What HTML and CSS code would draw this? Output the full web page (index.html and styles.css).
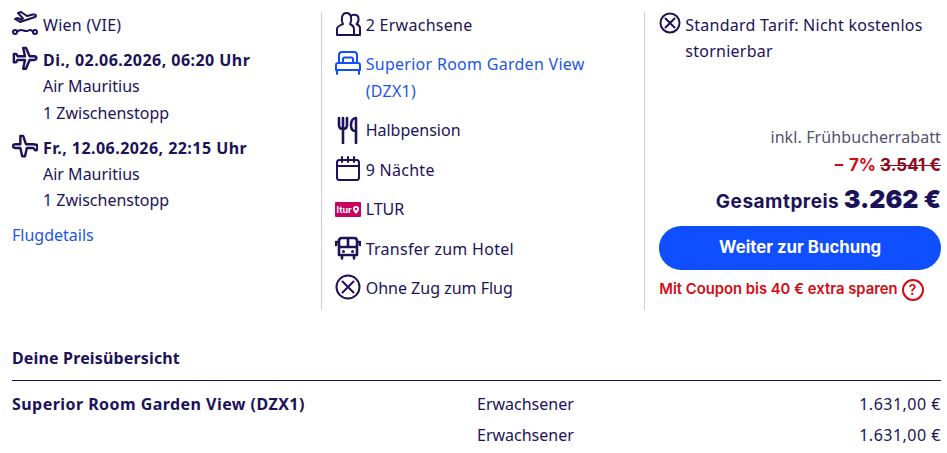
FILE: index.html
```html
<!DOCTYPE html>
<html>
<head>
<meta charset="UTF-8">
<title>Deine Reise</title>
<link rel="stylesheet" href="styles.css">
</head>
<body>

<div class="summary">
  <div class="col col-flight">
    <div class="row">
      <svg class="icon" width="26" height="26" viewBox="0 0 26 26"><path d="M6 2l3-1 6 4 6-1.500c3-.5 4 1.500 2 2.500L8 11 3 8l2.500-1 3 1.500 2.500-1z" class="line"/><circle cx="3" cy="21" r="2" class="line"/><circle cx="23" cy="21" r="2" class="line"/><path d="M5 21c4-5 7 0 10-1s4-2 6 1" class="line"/></svg>
      <span class="wide">Wien (VIE)</span>
    </div>
    <div class="row leg">
      <svg class="icon" width="26" height="26" viewBox="0 0 28 28"><path d="M12 2h3l4 9h5c3 0 3 4 0 4h-5l-4 9.500h-3l2-9.500H6l-1.500 2.500H2V8.500h2.500L6 11h8z" class="line thick"/></svg>
      <div>
        <div class="strong">Di., 02.06.2026, 06:20 Uhr</div>
        <div>Air Mauritius</div>
        <div>1 Zwischenstopp</div>
      </div>
    </div>
    <div class="row leg">
      <svg class="icon" width="26" height="26" viewBox="0 0 28 28"><path d="M16 2h3v9h5c3 0 3 1 3 2s-1 2-3 2h-5l-2 9h-3l-2-9H5l-2 2.500H1.500c-1-1-1-5 0-6H3L5 11h8z" class="line thick" transform="matrix(-1 0 0 1 28 0)"/></svg>
      <div>
        <div class="strong">Fr., 12.06.2026, 22:15 Uhr</div>
        <div>Air Mauritius</div>
        <div>1 Zwischenstopp</div>
      </div>
    </div>
    <a class="link details" href="#">Flugdetails</a>
  </div>

  <div class="col col-hotel">
    <div class="row">
      <svg class="icon" width="26" height="26" viewBox="0 0 26 26"><path d="M2 24v-6c0-3 4-4 6-5-2-3-2-11 3.500-11S17 10 15 13c2 1 4 2 4 5v6z" class="line"/><path d="M16 5c1-2 7-2 7.500 2 .3 3-.5 5-2 6 2 1 3.500 2 3.500 4v7h-6" class="line"/></svg>
      <span class="wide">2 Erwachsene</span>
    </div>
    <div class="row room">
      <svg class="icon blue" width="26" height="26" viewBox="0 0 26 26"><path d="M4 13V5c0-2 1-3 3-3h12c2 0 3 1 3 3v8M8 13V9c0-1 .5-1.500 1.500-1.500h7c1 0 1.500.5 1.500 1.500v4M3 13h20c1 0 2 1 2 2v5H1v-5c0-1 1-2 2-2zM2 20v4M24 20v4" class="line"/></svg>
      <a class="link wide hotel-name" href="#">Superior Room Garden View (DZX1)</a>
    </div>
    <div class="row">
      <svg class="icon" width="26" height="28" viewBox="0 0 26 28"><path d="M4 2v7c0 3 2 4 4 4s4-1 4-4V2M8 2v25M20 15c-3 0-4-2-4-6s2-7 5-7v25" class="line thick"/></svg>
      <span>Halbpension</span>
    </div>
    <div class="row">
      <svg class="icon" width="26" height="26" viewBox="0 0 26 26"><rect x="2" y="4" width="22" height="20" rx="2.500" class="line"/><path d="M2 10h22M7 1v5M13 1v5M19 1v5" class="line"/></svg>
      <span class="wide">9 Nächte</span>
    </div>
    <div class="row">
      <span class="ltur">ltur<svg width="6" height="8" viewBox="0 0 6 8"><path d="M3 0a3 3 0 0 1 3 3c0 2-3 5-3 5S0 5 0 3a3 3 0 0 1 3-3z" fill="#fff"/><circle cx="3" cy="3" r="1.200" fill="#c8005f"/></svg></span>
      <span>LTUR</span>
    </div>
    <div class="row">
      <svg class="icon" width="26" height="26" viewBox="0 0 26 26"><path d="M7 3h12c2 0 3 1 3 3v14H4V6c0-2 1-3 3-3zM4 12h18M1 10V7h3M25 10V7h-3M7 20v3.500M19 20v3.500M13 3v9" class="line thick"/><circle cx="8.500" cy="16.500" r="1.500" fill="#1c1259"/><circle cx="17.500" cy="16.500" r="1.500" fill="#1c1259"/></svg>
      <span class="wide">Transfer zum Hotel</span>
    </div>
    <div class="row">
      <svg class="icon" width="26" height="26" viewBox="0 0 26 26"><circle cx="13" cy="13" r="11.500" class="line"/><path d="M7.500 7.500l11 11M18.500 7.500l-11 11" class="line"/></svg>
      <span>Ohne Zug zum Flug</span>
    </div>
  </div>

  <div class="col col-price">
    <div class="row tarif">
      <svg class="icon" width="22" height="22" viewBox="0 0 22 22"><circle cx="11" cy="11" r="9.500" class="line"/><path d="M6.500 6.500l9 9M15.500 6.500l-9 9" class="line"/></svg>
      <span class="tarif-text">Standard Tarif: Nicht kostenlos stornierbar</span>
    </div>
    <div class="price">
      <div class="early">inkl. Frühbucherrabatt</div>
      <div class="discount">&minus; 7% <s>3.541 €</s></div>
      <div class="total"><span>Gesamtpreis</span> <b>3.262 €</b></div>
      <a class="book" href="#">Weiter zur Buchung</a>
      <div class="coupon">
        <span>Mit Coupon bis 40 € extra sparen</span>
        <span class="help">?</span>
      </div>
    </div>
  </div>
</div>

<div class="overview">
  <h2>Deine Preisübersicht</h2>
  <div class="line-item">
    <div class="item-name">Superior Room Garden View (DZX1)</div>
    <div>Erwachsener</div>
    <div class="amount">1.631,00 €</div>
  </div>
  <div class="line-item">
    <div class="item-name"></div>
    <div>Erwachsener</div>
    <div class="amount">1.631,00 €</div>
  </div>
</div>

</body>
</html>
```
FILE: styles.css
```css
body {
  margin: 0;
  padding: 12px 6px 0 12px;
  background-color: #ffffff;
  color: #1c1259;
  font-family: "Noto Sans", sans-serif;
  font-size: 16px;
  line-height: 27px;
  overflow: hidden;
}

/* The three columns at the top */
.summary {
  display: flex;
  height: 298px;
}

.col {
  display: flex;
  flex-direction: column;
  box-sizing: border-box;
}

.col-flight {
  width: 310px;
  line-height: 26.400px;
  border-right: 1px solid #cfcfd6;
}

.col-hotel {
  width: 324px;
  padding-left: 13px;
  border-right: 1px solid #cfcfd6;
  gap: 12.500px;
}

.col-price {
  width: 296px;
  padding-left: 14px;
}

.row {
  display: flex;
  align-items: flex-start;
  gap: 5px;
}

.room {
  margin-top: -1px;
}

.icon {
  flex: none;
  margin-top: -1px;
}

.line {
  fill: none;
  stroke: #1c1259;
  stroke-width: 2;
  stroke-linejoin: round;
  stroke-linecap: round;
}

.thick {
  stroke-width: 2.600;
}

.blue .line {
  stroke: #0f4fff;
}

.wide {
  letter-spacing: 0.280px;
}

.leg {
  margin-top: 8.500px;
}

.strong {
  font-weight: 700;
  letter-spacing: 0.450px;
}

.link {
  color: #1d55e8;
  text-decoration: none;
}

.hotel-name {
  max-width: 240px;
}

.details {
  margin-top: 8.500px;
}

.ltur {
  flex: none;
  display: flex;
  align-items: center;
  justify-content: center;
  gap: 1px;
  width: 26px;
  height: 15px;
  margin-top: 6px;
  border-radius: 1px;
  background-color: #c8005f;
  color: #ffffff;
  font-family: Inter, sans-serif;
  font-size: 9px;
  font-weight: 700;
  line-height: 15px;
}

/* Price column */
.tarif {
  line-height: 26px;
  gap: 4px;
}

.tarif .icon {
  margin-top: 0;
}

.tarif-text {
  letter-spacing: 0.250px;
}

.price {
  margin-top: 60px;
  text-align: right;
}

.early {
  color: #55506f;
  letter-spacing: 0.100px;
}

.discount {
  margin-top: 1px;
  color: #d40b14;
  font-family: Inter, sans-serif;
  font-size: 17px;
  font-weight: 700;
}

.discount s {
  color: #8d0a20;
}

.total {
  margin-top: 3px;
  font-family: Inter, sans-serif;
  font-size: 19px;
  font-weight: 700;
  line-height: 34px;
}

.total span {
  letter-spacing: 0.500px;
}

.total b {
  font-size: 25px;
}

.book {
  display: block;
  height: 44px;
  margin-top: 7px;
  border-radius: 22px;
  background-color: #0f4fff;
  color: #ffffff;
  font-family: Inter, sans-serif;
  font-size: 16.800px;
  font-weight: 700;
  line-height: 42px;
  text-align: center;
  text-decoration: none;
}

.coupon {
  display: flex;
  align-items: center;
  gap: 4px;
  margin-top: 6px;
  color: #d40b14;
  font-family: Inter, sans-serif;
  font-size: 14.800px;
  font-weight: 600;
}

.help {
  flex: none;
  width: 18px;
  height: 18px;
  border: 2px solid #d40b14;
  border-radius: 50%;
  font-size: 14px;
  line-height: 18px;
  text-align: center;
}

/* Price overview below */
.overview h2 {
  margin: 35px 0 0;
  padding-bottom: 8px;
  border-bottom: 1px solid #1c1259;
  font-size: 16px;
  font-weight: 700;
  letter-spacing: 0.150px;
  line-height: 27px;
}

.line-item {
  display: flex;
  margin-top: 10px;
  margin-bottom: -6px;
}

.item-name {
  width: 465px;
  font-weight: 700;
  letter-spacing: 0.450px;
}

.amount {
  margin-left: auto;
  letter-spacing: 0.500px;
}
```
